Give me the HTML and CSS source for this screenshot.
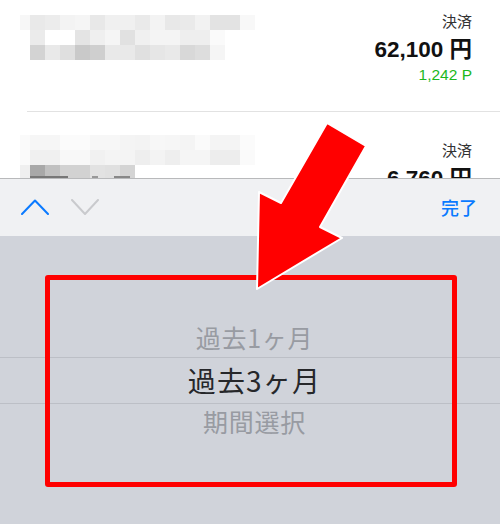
FILE: index.html
```html
<!DOCTYPE html>
<html lang="ja">
<head>
<meta charset="utf-8">
<title>期間選択</title>
<link rel="stylesheet" href="styles.css">
</head>
<body>
<main class="screen">
  <section class="list">
    <div class="list-scroll">
      <article class="row">
        <svg class="mosaic" width="240" height="45" viewBox="20 15 240 45" shape-rendering="crispEdges" aria-hidden="true">
          <rect x="20" y="15" width="10" height="15" fill="#f7f7f7"/><rect x="30" y="15" width="15" height="15" fill="#e9e9e9"/><rect x="45" y="15" width="15" height="15" fill="#ececec"/><rect x="60" y="15" width="15" height="15" fill="#f3f3f3"/><rect x="75" y="15" width="15" height="15" fill="#f5f5f5"/><rect x="90" y="15" width="15" height="15" fill="#e8e8e8"/><rect x="105" y="15" width="30" height="15" fill="#f0f0f0"/><rect x="135" y="15" width="15" height="15" fill="#eaeaea"/><rect x="150" y="15" width="15" height="15" fill="#f3f3f3"/><rect x="165" y="15" width="15" height="15" fill="#e8e8e8"/><rect x="180" y="15" width="15" height="15" fill="#eaeaea"/><rect x="195" y="15" width="15" height="15" fill="#f2f2f2"/><rect x="210" y="15" width="30" height="15" fill="#e3e3e3"/><rect x="240" y="15" width="15" height="15" fill="#f8f8f8"/>
          <rect x="30" y="30" width="15" height="15" fill="#ebebeb"/><rect x="75" y="30" width="15" height="15" fill="#e4e4e4"/><rect x="90" y="30" width="15" height="15" fill="#efefef"/><rect x="105" y="30" width="15" height="15" fill="#f5f5f5"/><rect x="120" y="30" width="15" height="15" fill="#e1e1e1"/><rect x="135" y="30" width="15" height="15" fill="#f0f0f0"/><rect x="150" y="30" width="30" height="15" fill="#f4f4f4"/><rect x="180" y="30" width="30" height="15" fill="#eeeeee"/><rect x="210" y="30" width="15" height="15" fill="#fafafa"/>
          <rect x="30" y="45" width="15" height="15" fill="#d3d3d3"/><rect x="45" y="45" width="15" height="15" fill="#e9e9e9"/><rect x="60" y="45" width="15" height="15" fill="#dfdfdf"/><rect x="75" y="45" width="15" height="15" fill="#c9c9c9"/><rect x="90" y="45" width="15" height="15" fill="#cfcfcf"/><rect x="105" y="45" width="30" height="15" fill="#e9e9e9"/><rect x="135" y="45" width="15" height="15" fill="#e0e0e0"/><rect x="150" y="45" width="15" height="15" fill="#e6e6e6"/><rect x="165" y="45" width="15" height="15" fill="#e9e9e9"/><rect x="180" y="45" width="15" height="15" fill="#d8d8d8"/><rect x="195" y="45" width="15" height="15" fill="#dddddd"/><rect x="210" y="45" width="15" height="15" fill="#f5f5f5"/>
        </svg>
        <div class="detail">
          <p class="status">決済</p>
          <p class="amount">62,100 円</p>
          <p class="points">1,242 P</p>
        </div>
      </article>
      <article class="row">
        <svg class="mosaic mosaic-second" width="240" height="45" viewBox="20 135 240 45" shape-rendering="crispEdges" aria-hidden="true">
          <rect x="20" y="135" width="10" height="15" fill="#fafafa"/><rect x="30" y="135" width="30" height="15" fill="#f6f6f6"/><rect x="60" y="135" width="30" height="15" fill="#fbfbfb"/><rect x="90" y="135" width="30" height="15" fill="#f7f7f7"/><rect x="120" y="135" width="15" height="15" fill="#f4f4f4"/><rect x="135" y="135" width="15" height="15" fill="#f3f3f3"/><rect x="150" y="135" width="15" height="15" fill="#f7f7f7"/><rect x="165" y="135" width="15" height="15" fill="#f6f6f6"/><rect x="180" y="135" width="15" height="15" fill="#f4f4f4"/><rect x="195" y="135" width="15" height="15" fill="#fafafa"/><rect x="210" y="135" width="30" height="15" fill="#f4f4f4"/><rect x="240" y="135" width="15" height="15" fill="#fbfbfb"/>
          <rect x="20" y="150" width="10" height="15" fill="#fafafa"/><rect x="30" y="150" width="30" height="15" fill="#f0f0f0"/><rect x="60" y="150" width="30" height="15" fill="#f8f8f8"/><rect x="90" y="150" width="15" height="15" fill="#f1f1f1"/><rect x="105" y="150" width="30" height="15" fill="#f4f4f4"/><rect x="135" y="150" width="15" height="15" fill="#eeeeee"/><rect x="150" y="150" width="15" height="15" fill="#f3f3f3"/><rect x="165" y="150" width="15" height="15" fill="#eeeeee"/><rect x="180" y="150" width="30" height="15" fill="#f5f5f5"/><rect x="210" y="150" width="30" height="15" fill="#ededed"/><rect x="240" y="150" width="15" height="15" fill="#fafafa"/>
          <rect x="20" y="165" width="10" height="15" fill="#efefef"/><rect x="30" y="165" width="15" height="15" fill="#a8a8a8"/><rect x="45" y="165" width="15" height="15" fill="#c0c0c0"/><rect x="60" y="165" width="30" height="15" fill="#d2d2d2"/><rect x="90" y="165" width="15" height="15" fill="#e2e2e2"/><rect x="105" y="165" width="15" height="15" fill="#e0e0e0"/><rect x="120" y="165" width="15" height="15" fill="#d4d4d4"/>
          <rect x="30" y="176" width="38" height="2" fill="#777"/><rect x="92" y="176" width="6" height="2" fill="#999"/><rect x="114" y="176" width="16" height="2" fill="#888"/>
        </svg>
        <div class="detail">
          <p class="status">決済</p>
          <p class="amount">6,760 円</p>
        </div>
      </article>
    </div>
  </section>

  <section class="sheet">
    <div class="toolbar">
      <div class="steppers">
        <svg class="chevron" width="28" height="16" viewBox="0 0 28 16" aria-hidden="true"><path class="chevron-on" d="M1 15 14 1.500 27 15"/></svg>
        <svg class="chevron" width="28" height="16" viewBox="0 0 28 16" aria-hidden="true"><path class="chevron-off" d="M1 1 14 15 27 1"/></svg>
      </div>
      <span class="done">完了</span>
    </div>
    <div class="picker">
      <div class="option">過去1ヶ月</div>
      <div class="option selected">過去3ヶ月</div>
      <div class="option option-last">期間選択</div>
    </div>
  </section>

  <div class="highlight"></div>
  <svg class="arrow" width="500" height="524" viewBox="0 0 500 524" aria-hidden="true">
    <path d="M327 123 366 146 320 227 342 238 257 289 259 192 281 203Z"/>
  </svg>
</main>
</body>
</html>
```
FILE: styles.css
```css
* {
  box-sizing: border-box;
}

html,
body {
  margin: 0;
  padding: 0;
}

body {
  background: #fff;
  font-family: "Liberation Sans", "Noto Sans CJK JP", sans-serif;
}

.screen {
  position: relative;
  width: 500px;
  height: 524px;
  overflow: hidden;
  display: flex;
  flex-direction: column;
}

.list {
  height: 178px;
  overflow: hidden;
  background: #fff;
}

.list-scroll {
  margin-top: -17px;
}

.row {
  height: 129px;
  padding: 32px 28px 0 20px;
  display: flex;
  justify-content: space-between;
  align-items: flex-start;
  position: relative;
}

.row:first-child::after {
  content: "";
  position: absolute;
  left: 27px;
  right: 0;
  bottom: 0;
  height: 1px;
  background: #e2e2e2;
}

.mosaic {
  display: block;
  flex: none;
  filter: blur(0.4px);
}

.mosaic-second {
  margin-top: -9px;
}

.detail {
  text-align: right;
  margin-top: -6px;
}

.detail p {
  margin: 0;
  white-space: nowrap;
}

.status {
  font-size: 15px;
  line-height: 24px;
  color: #333;
  font-family: "Noto Sans CJK JP", sans-serif;
}

.amount {
  font-size: 22.500px;
  line-height: 34px;
  font-weight: 700;
  color: #111;
}

.points {
  font-size: 15.500px;
  line-height: 16px;
  color: #1cb81c;
}

.sheet {
  flex: 1;
  display: flex;
  flex-direction: column;
}

.toolbar {
  height: 58px;
  background: #f0f1f3;
  border-top: 1px solid #b8b9bb;
  display: flex;
  align-items: center;
  justify-content: space-between;
  padding: 0 23px 2px 21px;
}

.steppers {
  display: flex;
  gap: 22px;
}

.chevron {
  display: block;
}

.chevron path {
  fill: none;
  stroke-width: 2;
  stroke-linecap: round;
  stroke-linejoin: round;
}

.chevron-on {
  stroke: #0a7aff;
}

.chevron-off {
  stroke: #c9cacd;
}

.done {
  font-family: "Noto Sans CJK JP", sans-serif;
  font-size: 18px;
  font-weight: 500;
  color: #0a7aff;
}

.picker {
  flex: 1;
  background: #d0d3da;
  display: flex;
  flex-direction: column;
  justify-content: center;
  font-family: "Noto Sans CJK JP", sans-serif;
}

.option {
  height: 40px;
  padding-left: 9px;
  text-align: center;
  font-size: 25px;
  letter-spacing: 0.7px;
  line-height: 40px;
  color: #989ba2;
}

.option-last {
  line-height: 35px;
}

.option.selected {
  height: 47px;
  line-height: 45px;
  font-size: 28px;
  letter-spacing: 1.200px;
  color: #26272a;
  border-top: 1px solid #bcbfc6;
  border-bottom: 1px solid #bcbfc6;
}

.highlight {
  position: absolute;
  left: 45px;
  top: 275px;
  width: 412px;
  height: 212px;
  border: 5px solid #f00;
  border-radius: 3px;
}

.arrow {
  position: absolute;
  left: 0;
  top: 0;
}

.arrow path {
  fill: #f00;
  stroke: #fff;
  stroke-width: 2;
  stroke-linejoin: round;
}
```
